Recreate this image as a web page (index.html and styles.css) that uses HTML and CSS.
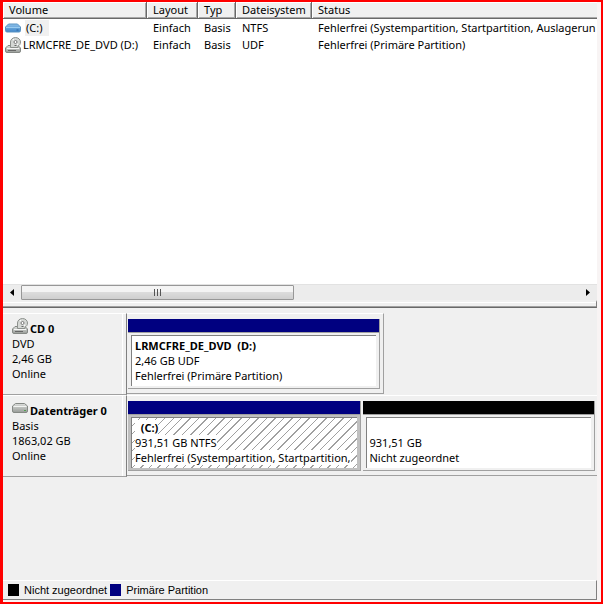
FILE: index.html
```html
<!DOCTYPE html>
<html lang="de">
<head>
<meta charset="utf-8">
<title>Datenträgerverwaltung</title>
<link rel="stylesheet" href="styles.css">
</head>
<body>
<svg class="defs" width="0" height="0" aria-hidden="true">
  <defs>
    <linearGradient id="metal" x1="0" y1="0" x2="0" y2="1">
      <stop offset="0" stop-color="#dcdedc"/><stop offset="1" stop-color="#989c98"/>
    </linearGradient>
    <linearGradient id="blue" x1="0" y1="0" x2="0" y2="1">
      <stop offset="0" stop-color="#8cc0ea"/><stop offset="1" stop-color="#3f86c8"/>
    </linearGradient>
    <symbol id="drive" viewBox="0 0 16 10">
      <path d="M3.500 .5h9L15.500 3v5q0 1.500-1.500 1.500H2Q.5 9.500 .5 8V3z" fill="url(#metal)" stroke="#858985"/>
      <path d="M1.500 3.500h13" stroke="#f2f4f2"/>
      <path d="M12 7.500h2" stroke="#4fa050"/>
    </symbol>
    <symbol id="volume" viewBox="0 0 16 10">
      <path d="M3.500 1h9L15.500 4v3.500q0 1.500-1.500 1.500H2Q.5 9 .5 7.500V4z" fill="url(#blue)" stroke="#5b93c2"/>
      <path d="M1 4.500h14" stroke="#9accf0"/>
      <path d="M11.500 7h2" stroke="#2b619c"/>
    </symbol>
    <symbol id="optical" viewBox="0 0 16 16">
      <path d="M3 8.500h10l2.500 2.500v3q0 1.500-1.500 1.500H2Q.5 15.500.5 14v-3z" fill="url(#metal)" stroke="#858985"/>
      <path d="M5.500 10.500V5a5 4.500 0 0 1 10 0c0 2-1 3.500-2.500 4v1.500z" fill="#d4d7d4" stroke="#8d918d"/>
      <path d="M10.500 5 8 2M10.500 5l2.500 3" stroke="#fff"/>
      <circle cx="10.500" cy="5" r="1.500" fill="#fff" stroke="#777"/>
      <path d="M9.500 8.500h2" stroke="#666"/>
      <path d="M2 11.500h12" stroke="#f6f6f6"/>
      <path d="M3 13.500h8" stroke="#666"/>
    </symbol>
  </defs>
</svg>
<main class="window">
  <section class="volumes">
    <table class="list">
      <colgroup><col class="c-volume"><col class="c-layout"><col class="c-type"><col class="c-fs"><col></colgroup>
      <thead>
        <tr><th>Volume</th><th>Layout</th><th>Typ</th><th>Dateisystem</th><th>Status</th></tr>
      </thead>
      <tbody>
        <tr>
          <td class="name"><div class="label"><svg class="icon-flat"><use href="#volume"/></svg><span class="selected">(C:)</span></div></td>
          <td>Einfach</td><td>Basis</td><td>NTFS</td><td>Fehlerfrei (Systempartition, Startpartition, Auslagerun</td>
        </tr>
        <tr>
          <td class="name"><div class="label"><svg class="icon-tall"><use href="#optical"/></svg><span>LRMCFRE_DE_DVD (D:)</span></div></td>
          <td>Einfach</td><td>Basis</td><td>UDF</td><td>Fehlerfrei (Primäre Partition)</td>
        </tr>
      </tbody>
    </table>
    <div class="scrollbar">
      <button class="arrow" aria-label="Nach links"><svg width="4" height="7" viewBox="0 0 4 7"><path d="M4 0v7L0 3.500z"/></svg></button>
      <div class="track"><div class="thumb"><i></i><i></i><i></i></div></div>
      <button class="arrow" aria-label="Nach rechts"><svg width="4" height="7" viewBox="0 0 4 7"><path d="M0 0v7l4-3.500z"/></svg></button>
    </div>
  </section>
  <div class="splitter"></div>
  <section class="disks">
    <article class="disk">
      <header class="info">
        <h2><svg class="icon-tall"><use href="#optical"/></svg>CD 0</h2>
        <p>DVD</p><p>2,46 GB</p><p>Online</p>
      </header>
      <div class="parts single">
        <div class="part">
          <div class="bar primary"></div>
          <div class="box"><div class="body">
            <h3>LRMCFRE_DE_DVD&nbsp; (D:)</h3><p>2,46 GB UDF</p><p>Fehlerfrei (Primäre Partition)</p>
          </div></div>
        </div>
      </div>
    </article>
    <article class="disk">
      <header class="info">
        <h2><svg class="icon-flat"><use href="#drive"/></svg>Datenträger 0</h2>
        <p>Basis</p><p>1863,02 GB</p><p>Online</p>
      </header>
      <div class="parts">
        <div class="part">
          <div class="bar primary"></div>
          <div class="box active"><div class="body hatched">
            <h3><span>&nbsp; (C:)</span></h3><p><span>931,51 GB NTFS</span></p><p><span>Fehlerfrei (Systempartition, Startpartition,</span></p>
          </div></div>
        </div>
        <div class="part">
          <div class="bar free"></div>
          <div class="box"><div class="body">
            <h3>&nbsp;</h3><p>931,51 GB</p><p>Nicht zugeordnet</p>
          </div></div>
        </div>
      </div>
    </article>
  </section>
  <footer class="legend">
    <span class="swatch free"></span><span>Nicht zugeordnet</span>
    <span class="swatch primary"></span><span>Primäre Partition</span>
  </footer>
</main>
</body>
</html>
```
FILE: styles.css
```css
* { box-sizing: border-box; margin: 0; padding: 0; }

body {
  font: 11px/15px "Noto Sans", "Open Sans", sans-serif;
  color: #000;
  background: #f8f4f4;
}

.defs { position: absolute; }

.window {
  display: flex;
  flex-direction: column;
  min-height: 100vh;
  border: 2px solid #f00;
  border-left-width: 3px;
  padding: 0 4px 2px 0;
}

.icon-flat { width: 16px; height: 10px; flex: none; }
.icon-tall { width: 16px; height: 16px; flex: none; }

.volumes {
  display: flex;
  flex-direction: column;
  height: 298px;
  background: #fff;
}

.list {
  width: 100%;
  table-layout: fixed;
  border-collapse: separate;
  border-spacing: 0;
  margin-bottom: auto;
}
.c-volume { width: 144px; }
.c-layout { width: 51px; }
.c-type { width: 38px; }
.c-fs { width: 76px; }

.list th, .list td {
  height: 17px;
  padding: 0 0 0 6px;
  line-height: 16px;
  font-weight: normal;
  text-align: left;
  white-space: nowrap;
  overflow: hidden;
}
.list th {
  background: #f0f0f0;
  border-bottom: 1px solid #696969;
  border-right: 1px solid #696969;
  box-shadow: inset 1px 1px #fff, inset -1px -1px #a8a8a8;
}
.list th:last-child { border-right: 0; box-shadow: inset 1px 1px #fff, inset 0 -1px #a8a8a8; }
.list .name { padding-left: 2px; }
.label { display: flex; align-items: center; height: 17px; gap: 2px; }
.selected { margin-left: 2px; padding: 0 6px 0 1px; background: #f0f0f0; }

.scrollbar {
  display: flex;
  height: 16px;
  background: #ececec;
  border-top: 1px solid #e2e2e2;
}
.arrow {
  display: flex;
  align-items: center;
  justify-content: center;
  width: 18px;
  border: 0;
  background: none;
}
.track { flex: 1; }
.thumb {
  display: flex;
  align-items: center;
  justify-content: center;
  gap: 2px;
  width: 49%;
  height: 15px;
  border: 1px solid #979797;
  border-radius: 1px;
  background: linear-gradient(#f4f4f4 45%, #dcdcdc 50%, #cfcfcf);
}
.thumb i { width: 1px; height: 7px; background: #555; }

.splitter {
  height: 8px;
  border-top: 2px solid #f0f0f0;
  border-bottom: 1px solid #696969;
  border-right: 1px solid #808080;
  background: #f0f0f0;
  box-shadow: inset 0 1px #fff, inset 0 -1px #a0a0a0;
}

.disks { flex: 1; padding-top: 5px; background: #f0f0f0; }

.disk { display: flex; height: 82px; }

.info {
  width: 124px;
  padding: 7px 0 0 9px;
  border-top: 1px solid #fff;
  border-right: 1px solid #808080;
  border-bottom: 1px solid #a0a0a0;
  box-shadow: inset -3px 0 #f0f0f0, inset -4px 0 #fff;
}
.info h2 { display: flex; align-items: center; gap: 2px; height: 15px; font-size: 11px; }
.info h2 svg { align-self: flex-start; }
.info h2 .icon-tall { margin-top: -3px; }

.parts {
  display: flex;
  flex: 1;
  gap: 2px;
  min-width: 0;
  height: 81px;
  padding: 5px 2px 4px 1px;
  border-top: 1px solid #fff;
  border-bottom: 1px solid #a0a0a0;
}
.parts.single {
  flex: 0 0 257px;
  padding-right: 3px;
  border-right: 1px solid #a0a0a0;
}

.part {
  display: flex;
  flex: 1 1 0;
  flex-direction: column;
  min-width: 0;
  border-right: 1px solid #a0a0a0;
  border-bottom: 1px solid #a0a0a0;
}
.bar { height: 13px; }
.primary { background: #000080; }
.free { background: #000; }

.box {
  flex: 1;
  min-height: 0;
  padding: 2px 3px 2px 3px;
  border-top: 1px solid #a0a0a0;
}
.box.active { background: #c0c0c0; }
.body {
  height: 100%;
  padding: 2px 0 0 3px;
  overflow: hidden;
  white-space: nowrap;
  background: #fff;
  border-top: 1px solid #808080;
  border-left: 1px solid #808080;
}
.body h3 { font-size: 11px; }
.hatched { background: repeating-linear-gradient(135deg, #fff 0 5px, #a0a0a0 5px 6px); }
.hatched span { display: inline-block; vertical-align: top; background: #fff; }

.legend {
  display: flex;
  align-items: center;
  height: 20px;
  padding: 0 5px;
  font: 11px/14px "Liberation Sans", Arial, sans-serif;
  background: #f0f0f0;
  border-top: 1px solid #fff;
  border-right: 1px solid #808080;
  border-bottom: 1px solid #808080;
}
.swatch { width: 11px; height: 12px; margin-right: 5px; }
.swatch.primary { margin-left: 3px; }
```
